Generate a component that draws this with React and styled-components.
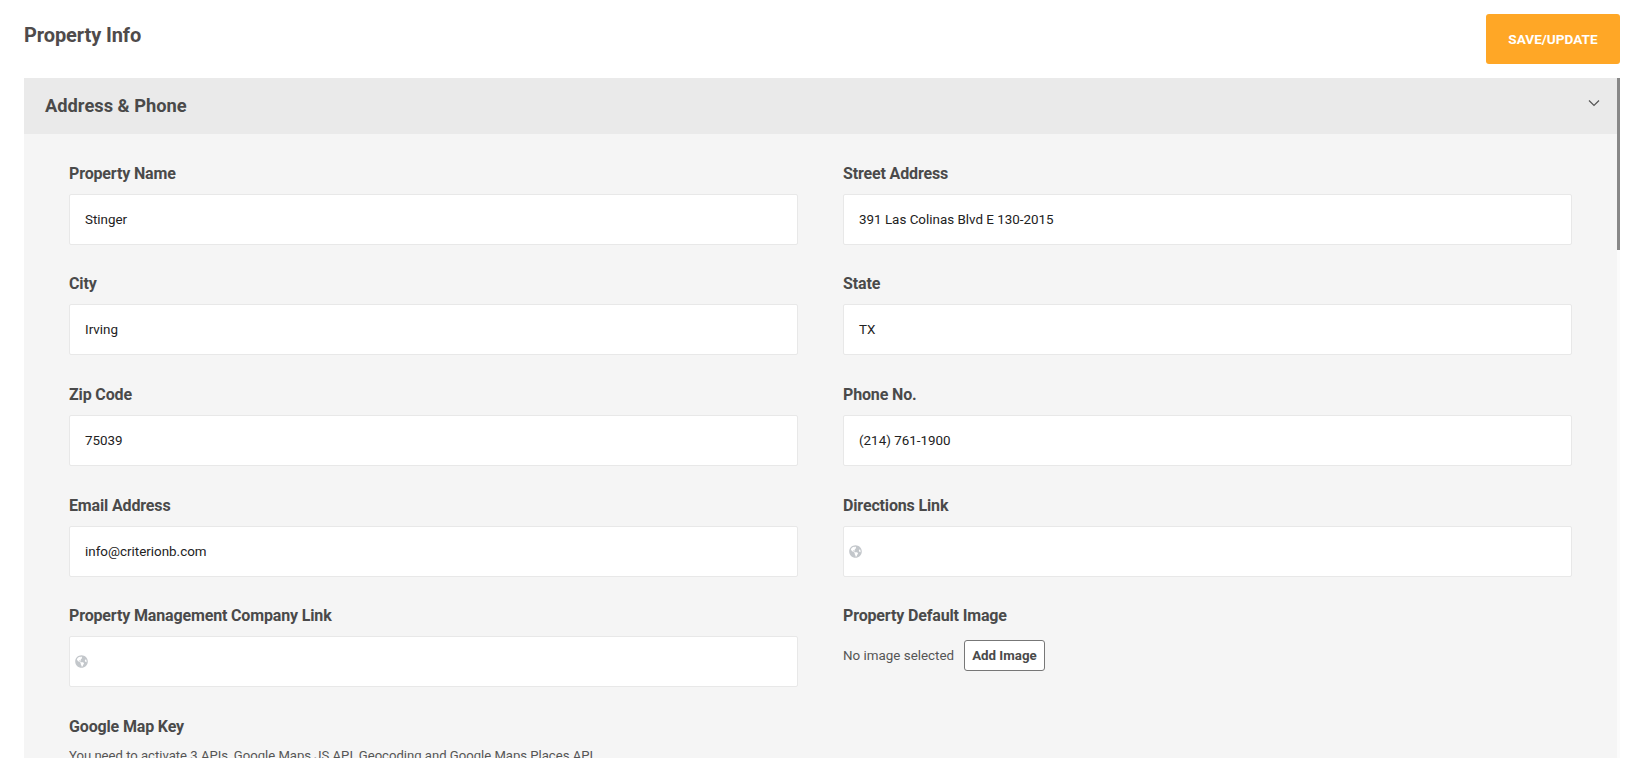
import React from 'react';
import styled, { createGlobalStyle } from 'styled-components';
import { FaGlobeAmericas } from 'react-icons/fa';

const GlobalStyle = createGlobalStyle`
    html, body {
        margin: 0;
        height: 761px;
        overflow: hidden;
        background: #fff;
    }
    * {
        box-sizing: border-box;
    }
`

const Page = styled.div`
    width: 1650px;
    height: 761px;
    overflow: hidden;
    padding: 14px 30px 0 24px;
    font-family: Roboto, "Liberation Sans", sans-serif;
    color: #4a4a4a;
`

const TopBar = styled.div`
    display: flex;
    justify-content: space-between;
    align-items: flex-start;
    height: 64px;
`

const PageTitle = styled.h1`
    margin: 9px 0 0;
    font-size: 20px;
    line-height: 24px;
    font-weight: 700;
    letter-spacing: -.1px;
    color: #4f4b4b;
`

const SaveButton = styled.button`
    width: 134px;
    height: 50px;
    border: 0;
    border-radius: 3px;
    background: #ffa726;
    color: #fff;
    font-family: inherit;
    font-size: 13.6px;
    font-weight: 700;
`

const Panel = styled.section`
    position: relative;
    background: #f5f5f5;
    height: 680px;
    overflow: hidden;
`

const PanelHeader = styled.div`
    display: flex;
    justify-content: space-between;
    height: 56px;
    padding: 14px 20px 0 21px;
    background: #eaeaea;
`

const PanelTitle = styled.h2`
    margin: 0;
    font-size: 18.3px;
    line-height: 28px;
    font-weight: 700;
    color: #4a4a4a;
`

const Chevron = styled.svg`
    width: 12px;
    height: 8px;
    margin-top: 7px;
    fill: none;
    stroke: #555;
    stroke-width: 1.2;
`

const ScrollTrack = styled.div`
    position: absolute;
    top: 0;
    right: 0;
    bottom: 0;
    width: 3px;
    background: #fbfbfb;
`

const ScrollThumb = styled.div`
    height: 172px;
    background: #888;
`

const FormGrid = styled.div`
    display: grid;
    grid-template-columns: 729px 729px;
    column-gap: 45px;
    row-gap: 29.55px;
    padding: 29.9px 48px 0 45px;
`

const Field = styled.div`
    min-width: 0;
`

const Label = styled.label`
    display: block;
    height: 30px;
    font-size: 16px;
    line-height: 20px;
    font-weight: 700;
    letter-spacing: -.15px;
    color: #4a4a4a;
`

const InputBox = styled.div`
    display: flex;
    align-items: center;
    height: 51px;
    padding-left: ${p => p.$link ? '5px' : '15px'};
    background: #fff;
    border: 1px solid #e8e8e8;
    border-radius: 2px;
    font-size: 13.4px;
    color: #222;
`

const GlobeIcon = styled(FaGlobeAmericas)`
    width: 13px;
    height: 13px;
    color: #c3c7cb;
`

const ImageRow = styled.div`
    display: flex;
    align-items: center;
    gap: 10px;
    height: 31px;
    margin-top: 4px;
    font-size: 13.4px;
    color: #555;
`

const AddImageButton = styled.button`
    height: 31px;
    padding: 0 7px;
    background: #fff;
    border: 1px solid #777;
    border-radius: 3px;
    font-family: inherit;
    font-size: 13.3px;
    font-weight: 700;
    color: #4a4a4a;
`

const WideField = styled(Field)`
    grid-column: 1 / -1;
`

const Hint = styled.p`
    margin: 0;
    font-size: 13.1px;
    line-height: 18px;
    color: #555;
`

const fields = [
    { label: 'Property Name', value: 'Stinger' },
    { label: 'Street Address', value: '391 Las Colinas Blvd E 130-2015' },
    { label: 'City', value: 'Irving' },
    { label: 'State', value: 'TX' },
    { label: 'Zip Code', value: '75039' },
    { label: 'Phone No.', value: '(214) 761-1900' },
    { label: 'Email Address', value: 'info@criterionb.com' },
    { label: 'Directions Link', link: true },
    { label: 'Property Management Company Link', link: true },
]

const App = () => {
    return (
        <Page>
            <GlobalStyle />
            <TopBar>
                <PageTitle>Property Info</PageTitle>
                <SaveButton>SAVE/UPDATE</SaveButton>
            </TopBar>
            <Panel>
                <ScrollTrack><ScrollThumb /></ScrollTrack>
                <PanelHeader>
                    <PanelTitle>Address &amp; Phone</PanelTitle>
                    <Chevron viewBox="0 0 12 8"><path d="M1 1.5l5 5 5-5" /></Chevron>
                </PanelHeader>
                <FormGrid>
                    {fields.map(f => (
                        <Field key={f.label}>
                            <Label>{f.label}</Label>
                            <InputBox $link={f.link}>
                                {f.link ? <GlobeIcon /> : f.value}
                            </InputBox>
                        </Field>
                    ))}
                    <Field>
                        <Label>Property Default Image</Label>
                        <ImageRow>
                            No image selected
                            <AddImageButton>Add Image</AddImageButton>
                        </ImageRow>
                    </Field>
                    <WideField>
                        <Label>Google Map Key</Label>
                        <Hint>You need to activate 3 APIs, Google Maps JS API, Geocoding and Google Maps Places API</Hint>
                    </WideField>
                </FormGrid>
            </Panel>
        </Page>
    )
}

export default App
